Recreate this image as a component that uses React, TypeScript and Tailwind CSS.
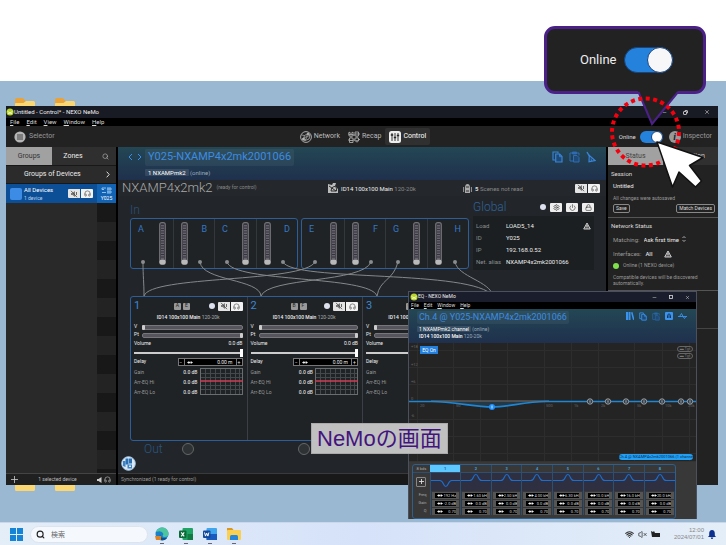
import React from "react";
import { Search, X, Minus, Settings, Power, Lock, Headphones, Wifi, VolumeX } from "lucide-react";

const UI = "font-['Roboto','Noto_Sans_CJK_JP',sans-serif]";

function Folder() {
  return (
    <svg className="h-4 w-5" viewBox="0 0 20 16" aria-hidden="true">
      <path d="M0 1.5Q0 0 1.5 0H8l2.500 3H20v4H0z" fill="#e8a33d" />
      <path d="M0 5.500Q0 5 1.500 5H8.500L11 3h7.500Q20 3 20 4.500V14.500Q20 16 18.500 16H1.500Q0 16 0 14.500z" fill="#fbd774" />
    </svg>
  );
}

function AppDot() {
  return (
    <svg className="size-2 shrink-0" viewBox="0 0 8 8" aria-hidden="true">
      <circle cx="4" cy="4" r="3.500" fill="#b9d52b" />
      <path d="M1.500 3.500q2.500 2.500 5 0M2 5.600q2-1 4 0" stroke="#eaf7b0" strokeWidth="1" fill="none" />
    </svg>
  );
}

function MuteGlyph() {
  return (
    <svg className="h-2 w-2" viewBox="0 0 8 8" fill="none" stroke="#444" aria-hidden="true">
      <path d="M1 3h1.500L5 1v6L2.500 5H1z" fill="#777" stroke="none" />
      <path d="M1 .8l6 6.400M6.500 2v3" strokeWidth=".8" />
    </svg>
  );
}

function MuteSolo() {
  return (
    <div className="flex h-[9px] shrink-0 gap-px">
      <button aria-label="Mute" className="flex w-3 items-center justify-center rounded-l-[1px] bg-[#e4e4e4]">
        <MuteGlyph />
      </button>
      <button aria-label="Solo" className="flex w-3 items-center justify-center rounded-r-[1px] bg-[#f2f2f2]">
        <Headphones className="size-[7px] text-[#444]" />
      </button>
    </div>
  );
}

function CopyGlyph({ className }: { className: string }) {
  return (
    <svg className={className} viewBox="0 0 11 12" fill="none" stroke="currentColor" aria-hidden="true">
      <path d="M3 9H1V1h5v1.500" strokeWidth="1.100" />
      <path d="M3.700 3h4L10 5.500V11H3.700z" strokeWidth="1.200" fill="#1f4a78" />
      <path d="M7.500 3v2.700H10" strokeWidth=".9" />
    </svg>
  );
}

function PasteGlyph({ className }: { className: string }) {
  return (
    <svg className={className} viewBox="0 0 11 12" fill="none" stroke="currentColor" aria-hidden="true">
      <path d="M4 10H1V2h2M8 2h2v2.500" strokeWidth="1" />
      <path d="M3.500 1h4v2h-4z" strokeWidth=".9" fill="currentColor" />
      <path d="M4.500 4.500h3.500L10 6.500V11H4.500z" strokeWidth="1" fill="#1f4a78" />
    </svg>
  );
}

function BroomGlyph({ className }: { className: string }) {
  return (
    <svg className={className} viewBox="0 0 10 12" fill="none" stroke="currentColor" aria-hidden="true">
      <path d="M1 1l2.300 4" strokeWidth="1.400" />
      <path d="M3.300 4.500L9 9.500 3 10.700z" strokeWidth="1.200" />
      <path d="M5 7.500l.5 2.500" strokeWidth=".9" />
    </svg>
  );
}

function WarningGlyph({ className }: { className: string }) {
  return (
    <svg className={className} viewBox="0 0 8 8" aria-hidden="true">
      <path d="M4 1L7.300 7H.7z" fill="#555" stroke="#ccc" strokeWidth="1" strokeLinejoin="round" />
      <path d="M4 3v2M4 5.700v.7" stroke="#fff" strokeWidth=".8" />
    </svg>
  );
}

function MenuBar({ items, className }: { items: string[]; className: string }) {
  return (
    <nav className={className}>
      {items.map((m) => (
        <button key={m}>
          <span className="underline">{m[0]}</span>
          {m.slice(1)}
        </button>
      ))}
    </nav>
  );
}

function RestoreGlyph() {
  return (
    <svg className="size-[5px]" viewBox="0 0 5 5" fill="none" stroke="#ddd" strokeWidth=".8" aria-hidden="true">
      <rect x=".5" y="1.500" width="3" height="3" rx=".5" />
      <path d="M1.800 .5H4a.5.5 0 0 1 .5.5v2.200" />
    </svg>
  );
}

function TitleBar() {
  return (
    <header className="flex h-3 shrink-0 items-center bg-[#191b24] pr-2 text-[6px] leading-3 text-[#eee]">
      <AppDot />
      <span className="flex-1">Untitled - Control* - NEXO NeMo</span>
      <div className="flex gap-4">
        <button aria-label="Minimize"><Minus className="size-[5px]" /></button>
        <button aria-label="Restore"><RestoreGlyph /></button>
        <button aria-label="Close"><X className="size-[6px]" /></button>
      </div>
    </header>
  );
}

function NetworkGlyph() {
  return (
    <svg className="size-3" viewBox="0 0 12 12" fill="none" stroke="#aaa" strokeWidth=".8" aria-hidden="true">
      <circle cx="6" cy="6" r="5.400" strokeWidth="1" />
      <path d="M1.500 4l3 .5L8 2.500 10 4 9 8 5 9.500 2 8.500M4.500 4.500Q3 6.500 5 9.500M8 2.500Q8 6 2 8M10 4Q7 4.500 5 9.500" />
      <circle cx="8" cy="3" r=".9" fill="#ccc" />
      <circle cx="3.500" cy="8" r=".9" fill="#ccc" />
    </svg>
  );
}

function RecapGlyph() {
  return (
    <svg className="size-3" viewBox="0 0 12 12" fill="none" stroke="#aaa" strokeWidth=".9" aria-hidden="true">
      <path d="M1 5V1l2 1.500L5 1v4zM1 3.500h4M7 1h3.500v4H7zM7 3h3.500M1.500 7H5v4.500H1.500zM1.500 9.500H5M7 7h3.500v3H7zM9 9v2.500M5 4h2M5 9h2M3 5v2M9 5v2M0 3h1M0 9h1.500M10.500 3H12M10.500 8.500H12" />
    </svg>
  );
}

function ControlGlyph() {
  return (
    <svg className="size-3" viewBox="0 0 12 12" aria-hidden="true">
      <rect width="12" height="12" rx="2.500" fill="#eee" />
      <path d="M3 2v8M6 2v8M9 2v8" stroke="#222" strokeWidth=".9" />
      <path d="M1.800 4h2.400M4.800 6.500h2.400M7.800 4.500h2.400" stroke="#222" strokeWidth="1.600" />
    </svg>
  );
}

function Toolbar() {
  return (
    <div className="relative flex h-[21px] shrink-0 items-center bg-[#222] pl-2 pr-[6px] text-[7px] text-[#999]">
      <button className="flex flex-1 items-center gap-[3px]">
        <svg className="size-3" viewBox="0 0 12 12" aria-hidden="true">
          <circle cx="6" cy="6" r="5.600" fill="#b5b5b5" />
          <path d="M3 4h6M3 6h6M3 8h6" stroke="#444" strokeWidth="1" />
        </svg>
        Selector
      </button>
      <div className="flex items-center gap-1 text-[#bbb]">
        <button className="flex items-center gap-[2px] px-1"><NetworkGlyph />Network</button>
        <button className="flex items-center gap-[2px]"><RecapGlyph />Recap</button>
        <button className="flex h-[17px] items-center gap-[2px] rounded-[2px] bg-[#303030] px-1 text-white"><ControlGlyph />Control</button>
      </div>
      <div className="flex flex-1 items-center justify-end">
        <label className="flex items-center gap-1 text-[6px] text-[#ddd]">
          Online
          <span className="relative flex">
            <input type="checkbox" role="switch" defaultChecked className="h-3 w-[23px] appearance-none rounded-full bg-[#2582dc]" />
            <span className="pointer-events-none absolute right-0 top-0 size-3 rounded-full border border-[#17457f] bg-white" />
          </span>
        </label>
        <button className="ml-[6px] flex items-center gap-[2px]">
          <span className="flex size-3 items-center justify-center rounded-full bg-[#999] font-['Liberation_Serif',serif] text-[10px] font-bold italic leading-3 text-[#222]">i</span>
          Inspector
        </button>
      </div>
    </div>
  );
}

function Sidebar() {
  return (
    <aside className="flex w-28 shrink-0 flex-col border-r-2 border-black bg-[#292929] text-[7px] text-[#ddd]">
      <div className="flex h-[18px] shrink-0 items-center bg-[#2f2f2f]">
        <button className="h-full w-[46px] bg-[#a1a1a1] text-[#333]">Groups</button>
        <button className="flex-1 text-[#eee]">Zones</button>
        <button aria-label="Search devices" className="w-[22px]"><Search className="mx-auto size-[7px] text-[#bbb]" /></button>
      </div>
      <button className="flex h-[19px] shrink-0 items-center border-y border-[#181818] bg-[#2b2b2b] pl-[18px] pr-[6px] text-[#eee]">
        <span className="flex-1 text-left">Groups of Devices</span>
        <svg className="h-[7px] w-1" viewBox="0 0 4 7" fill="none" stroke="#ddd" aria-hidden="true"><path d="M.7.7l2.500 2.800L.7 6.300" /></svg>
      </button>
      <div className="flex h-[19px] shrink-0 items-center bg-[#0d4f97] text-[5px] leading-[9px] text-white">
        <span className="ml-1 size-3 rounded-[2px] bg-[#3c8ce6]" />
        <div className="ml-[2px] flex-1 whitespace-nowrap"><p className="text-[6px]">All Devices</p><p className="text-[#b9d2ee]">1 device</p></div>
        <MuteSolo />
        <div className="ml-1 flex h-full w-[19px] flex-col items-center justify-center gap-px bg-[#1263b4]">
          <svg className="h-[7px] w-[11px]" viewBox="0 0 11 7" fill="none" stroke="#9cc9f5" aria-hidden="true">
            <path d="M5 1H1v1.500h2M5 5.500H1M7 0v7M9 0v7M6 2h5M6 5h5" strokeWidth=".9" />
          </svg>
          <span className="leading-[6px]">Y025</span>
        </div>
      </div>
      <div className="flex min-h-0 flex-1 justify-end">
        <div className="flex w-[19px] flex-col overflow-hidden">
          {Array.from({ length: 15 }, (_, i) => (
            <div key={i} className={i % 2 ? "h-[19px] shrink-0 bg-[#232323]" : "h-[19px] shrink-0 bg-[#181818]"} />
          ))}
        </div>
      </div>
      <footer className="flex h-3 shrink-0 items-center border-t border-[#444] bg-[#202020] px-[5px] text-[5px] text-[#bbb]">
        <button aria-label="Add group">
          <svg className="size-[7px]" viewBox="0 0 7 7" stroke="#ccc" aria-hidden="true"><path d="M3.500 0v7M0 3.500h7" strokeWidth=".8" /></svg>
        </button>
        <span className="flex-1 text-center">1 selected device</span>
        <svg className="h-[6px] w-[6px]" viewBox="0 0 6 6" aria-hidden="true"><path d="M0 2h1.500L4.500 0v6L1.500 4H0z" fill="#ccc" /></svg>
        <Headphones className="ml-px size-[7px] text-[#ccc]" />
      </footer>
    </aside>
  );
}

function Meter() {
  return (
    <svg className="h-[43px] w-[7px]" viewBox="0 0 7 43" aria-hidden="true">
      <rect x=".7" y=".7" width="5.600" height="41.600" rx="2" fill="#35333c" stroke="#737378" strokeWidth="1.200" />
      <path d="M3.500 3v35" stroke="#66626e" strokeWidth="3" strokeDasharray="1.500 1" />
      <rect x=".5" y="37.500" width="6" height="5" rx="2" fill="#b9b9b9" />
    </svg>
  );
}

function InputBank({ letters }: { letters: string[] }) {
  return (
    <div className="grid h-[51px] flex-1 grid-cols-4 rounded-[3px] border border-[#2c5f9a] bg-[#1f2326]">
      {letters.map((l, i) => (
        <div
          key={l}
          className={
            "flex items-start justify-between px-[7px] pt-[3px] text-[9px] leading-[14px] text-[#3478c4] " +
            (i % 2 ? "flex-row-reverse " : "") +
            (i ? "border-l border-[#33383c]" : "")
          }
        >
          {l}
          <Meter />
        </div>
      ))}
    </div>
  );
}

const cables = [
  "M25 115C25 130 26 135 26 149",
  "M82 115C84 134 142 132 143 149",
  "M109 115C115 136 252 128 259 149",
  "M165 115C175 135 355 122 375 149",
  "M197 115C185 136 32 128 26 149",
  "M253 115C245 136 150 130 143 149",
  "M280 115C275 134 262 132 259 149",
  "M337 115C340 130 372 134 375 149",
];
const jacks = [25, 82, 109, 165, 197, 253, 280, 337];

function Patching() {
  return (
    <svg className="pointer-events-none absolute left-0 top-0 h-[160px] w-[488px]" viewBox="0 0 488 160" fill="none" aria-hidden="true">
      {cables.map((d) => <path key={d} d={d} stroke="#85878a" strokeWidth="1" />)}
      {jacks.map((x) => <circle key={x} cx={x} cy="115" r="2" fill="#8a8c8f" />)}
    </svg>
  );
}

function LevelBar({ label, end }: { label: string; end: boolean }) {
  return (
    <div className="flex h-2 items-center gap-px text-[5px]">
      <span className="w-[7px]">{label}</span>
      <span className="relative h-[5px] flex-1 rounded-[2px] border border-[#77777b] bg-[#56545c]">
        <span className={end ? "absolute -right-px -top-px h-[5px] w-[3px] rounded-[1px] bg-[#ccc]" : "absolute -left-px -top-px h-[5px] w-[3px] rounded-[1px] bg-[#ccc]"} />
      </span>
    </div>
  );
}

function Arrows() {
  return (
    <svg className="ml-[2px] h-[3px] w-[6px] shrink-0" viewBox="0 0 6 3" aria-hidden="true">
      <path d="M0 1.500L2.300 0v3zM6 1.500L3.700 0v3zM2 1.100h2v.8H2z" fill="#eee" />
    </svg>
  );
}

function Channel({ n, tags }: { n: number; tags: string[] }) {
  return (
    <section className={"pl-[3px] pr-1 pt-[3px] text-[5px] text-[#eee]" + (n > 1 ? " border-l border-[#3b4044]" : "")}>
      <div className="flex h-3 items-center">
        <span className="w-10 text-[11px] leading-3 text-[#3a87d8]">{n}</span>
        <div className="flex gap-[2px]">
          {tags.map((t) => (
            <span key={t} className="flex size-[7px] items-center justify-center rounded-[1px] bg-[#999] text-[#222]">{t}</span>
          ))}
        </div>
        <span className="ml-auto mr-[3px] size-[6px] rounded-full bg-[#dde0ee]" />
        <MuteSolo />
      </div>
      <p className="h-[11px] text-center leading-[11px]"><b className="font-medium">ID14 100x100 Main</b> <span className="text-[#aaa]">120-20k</span></p>
      <LevelBar label="V" end={false} />
      <LevelBar label="Pt" end />
      <label>
        <span className="flex h-[9px] items-center justify-between"><span>Volume</span><span>0.0 dB</span></span>
        <input
          type="range"
          defaultValue={100}
          className="block h-[9px] w-full appearance-none bg-transparent [&::-webkit-slider-runnable-track]:h-[2px] [&::-webkit-slider-runnable-track]:bg-[#ccc] [&::-webkit-slider-thumb]:-mt-[3px] [&::-webkit-slider-thumb]:h-2 [&::-webkit-slider-thumb]:w-[3px] [&::-webkit-slider-thumb]:appearance-none [&::-webkit-slider-thumb]:bg-white"
        />
      </label>
      <div className="flex h-[10px] items-center justify-between">
        <label htmlFor={`delay-${n}`}>Delay</label>
        <div className="flex h-2 w-[65px] items-center border border-[#777] bg-black leading-[6px]">
          <button className="w-[6px] border-r border-[#777]">−</button>
          <Arrows />
          <input id={`delay-${n}`} defaultValue="0.00 m" className="h-[6px] min-w-0 flex-1 bg-transparent pr-[3px] text-right" />
          <button className="w-[6px] border-l border-[#777]">+</button>
        </div>
      </div>
      <div className="flex items-stretch">
        <dl className="grid flex-1 grid-cols-[1fr_auto] pr-[2px] leading-[10px] text-[#999]">
          {["Gain", "Arr-EQ Hi", "Arr-EQ Lo"].map((k) => (
            <React.Fragment key={k}>
              <dt>{k}</dt>
              <dd className="font-medium text-[#ddd]">0.0 dB</dd>
            </React.Fragment>
          ))}
        </dl>
        <svg className="mt-px h-[27px] w-[43px]" viewBox="0 0 43 27" fill="none" aria-hidden="true">
          <path d="M5.500 0v27M10.500 0v27M15.500 0v27M20.500 0v27M25.500 0v27M30.500 0v27M35.500 0v27M39.500 0v27M0 5.500h43M0 9.500h43M0 17.500h43M0 21.500h43" stroke="#45494c" />
          <rect x=".5" y=".5" width="42" height="26" stroke="#6a6d70" />
          <path d="M0 13h43" stroke="#cf3f56" strokeWidth="1.400" />
        </svg>
      </div>
    </section>
  );
}

function SquareButton({ label, children }: { label: string; children: React.ReactNode }) {
  return <button aria-label={label} className="flex h-[9px] w-3 items-center justify-center rounded-[1px] bg-[#eee] text-[#333]">{children}</button>;
}

function DevicePanel() {
  const facts = [["Load", "LOAD5_14"], ["ID", "Y025"], ["IP", "192.168.0.52"], ["Net. alias", "NXAMP4x2mk2001066"]];
  return (
    <main className="flex min-w-0 flex-1 flex-col bg-[#22262a]">
      <div className="flex h-[33px] shrink-0 bg-gradient-to-b from-[#234754] to-[#1f304d] pl-[10px] pt-[2px]">
        <svg className="mt-1 h-2 w-[14px]" viewBox="0 0 14 8" fill="none" stroke="#3a8fe6" aria-hidden="true"><path d="M4 1L1 4l3 3M10 1l3 3-3 3" /></svg>
        <div className="ml-[3px] flex-1">
          <h1 className="flex h-[17px] w-fit items-center rounded-[2px] bg-white/5 px-[3px] text-[11px] text-[#3b8ce2]">Y025-NXAMP4x2mk2001066</h1>
          <p className="mt-[2px] text-[6px] leading-[9px] text-[#9ab]"><span className="rounded-[1px] bg-white/10 px-[3px] text-white">1 NXAMPmk2</span> (online)</p>
        </div>
        <div className="mr-[10px] flex h-4 items-start gap-[6px] pt-[2px] text-[#3a83d6]">
          <button aria-label="Copy"><CopyGlyph className="h-3 w-[11px]" /></button>
          <button aria-label="Paste" className="text-[#2f6cb4]"><PasteGlyph className="h-3 w-[11px]" /></button>
          <button aria-label="Clear"><BroomGlyph className="h-3 w-[10px]" /></button>
        </div>
      </div>
      <div className="flex h-4 shrink-0 items-center bg-[#24282c] pl-1 pr-[6px] text-[5px] text-[#888]">
        <h2 className="text-[13px] font-light leading-4 text-[#aaa]">NXAMP4x2mk2</h2>
        <span className="ml-1 flex-1">(ready for control)</span>
        <svg className="size-[10px]" viewBox="0 0 10 10" aria-hidden="true"><path d="M0 1l4 1 1-2h3l-1 3 3 3v4H0z" fill="#bbb" /><path d="M1 3l7 5M3 8Q3 4 6 3.500T8.500 8z" stroke="#222" fill="none" strokeWidth=".9" /></svg>
        <span className="ml-[3px] w-[122px] text-[6px]"><span className="text-[#eee]">ID14 100x100 Main</span> 120-20k</span>
        <svg className="h-[9px] w-[9px]" viewBox="0 0 9 9" aria-hidden="true"><path d="M2 9V4Q2 0 4.500 0T7 4v5z" fill="#aaa" /><path d="M.6 3v5M8.400 3v5" stroke="#999" /><path d="M3 3h3M3 7h3" stroke="#333" /></svg>
        <span className="ml-[3px] w-[100px] text-[6px]"><b className="text-[#ddd]">5</b> Scenes not read</span>
        <MuteSolo />
      </div>
      <div className="flex-1 px-3 pt-[2px]">
        <div className="flex">
          <div className="flex-1">
            <h3 className="h-5 text-[12px] font-light leading-6 text-[#2a5078]">In</h3>
            <div className="relative -ml-3 pl-3">
              <div className="flex gap-[3px]">
                <InputBank letters={["A", "B", "C", "D"]} />
                <InputBank letters={["E", "F", "G", "H"]} />
              </div>
              <div className="absolute -top-[71px] left-0"><Patching /></div>
            </div>
          </div>
          <section className="ml-1 w-[121px]">
            <div className="flex h-[18px] items-center gap-1">
              <h3 className="flex-1 text-[12px] font-light text-[#2f6299]">Global</h3>
              <span className="size-[6px] rounded-full bg-[#dde0ee]" />
              <SquareButton label="Settings"><Settings className="size-[7px]" /></SquareButton>
              <SquareButton label="Power"><Power className="size-[7px]" /></SquareButton>
              <SquareButton label="Lock"><Lock className="size-[7px]" /></SquareButton>
            </div>
            <dl className="relative grid grid-cols-[30px_1fr] gap-y-px bg-[#1b1f21] px-[3px] pb-[3px] pt-1 text-[6px] leading-[11px] text-[#8a8f93]">
              {facts.map(([k, v]) => (
                <React.Fragment key={k}>
                  <dt>{k}</dt>
                  <dd className="whitespace-nowrap text-[#eee]">{v}</dd>
                </React.Fragment>
              ))}
              <WarningGlyph className="absolute right-[3px] top-[6px] size-2" />
            </dl>
          </section>
        </div>
        <div className="mt-[26px] grid h-[145px] grid-cols-4 rounded-[3px] border border-[#2c5f9a] bg-[#1f2326]">
          <Channel n={1} tags={["A", "E"]} />
          <Channel n={2} tags={["B", "F"]} />
          <Channel n={3} tags={["C", "G"]} />
          <div className="border-l border-[#3b4044]" />
        </div>
        <div className="flex h-4 items-center">
          <h3 className="w-[52px] pl-[14px] text-[12px] font-light text-[#2a5580]">Out</h3>
          <span className="size-3 rounded-full border border-[#666] bg-[#2e3235]" />
          <span className="ml-[104px] size-3 rounded-full border border-[#666] bg-[#2e3235]" />
        </div>
        <button aria-label="Presets" className="-ml-[9px] -mt-px block">
          <svg className="size-[15px]" viewBox="0 0 15 15" aria-hidden="true">
            <circle cx="7.500" cy="7.500" r="6.800" fill="#dbe9f7" stroke="#a9c8e6" />
            <path d="M4.500 2.500h3v6h-3zM8 2.500h3v5H8z" fill="#2c70b4" />
            <path d="M2 5h2.500v6L2 10zM6.500 8.500h4.500v4H6.500z" fill="#3d82c4" />
            <path d="M8 10.500h2M9 9v2" stroke="#fff" strokeWidth=".8" />
          </svg>
        </button>
      </div>
      <footer className="h-3 shrink-0 border-t border-[#3a3a3a] bg-[#191919] pl-[3px] text-[5px] leading-[11px] text-[#999]">Synchronized (1 ready for control)</footer>
    </main>
  );
}

function Inspector() {
  return (
    <aside className="flex w-28 shrink-0 flex-col border-l-2 border-black bg-[#222] text-[6px] text-[#999]">
      <div className="flex h-[18px] shrink-0 bg-[#303030] text-[7px]">
        <button className="flex-1 bg-[#a1a1a1] text-[#444]">Status</button>
        <button className="flex-1 text-[#ccc]">Selection</button>
      </div>
      <section className="h-[53px] border-b border-[#555] px-[3px] pt-[3px] leading-3">
        <h3 className="text-[#ddd]">Session</h3>
        <p className="pl-[2px] text-[#eee]">Untitled</p>
        <p className="pl-[2px] text-[5px]">All changes were autosaved</p>
        <div className="flex justify-between pl-[2px] text-[5px] leading-[7px] text-[#ddd]">
          <button className="rounded-[2px] border border-[#888] px-[2px]">Save</button>
          <button className="rounded-[2px] border border-[#888] px-[2px]">Match Devices</button>
        </div>
      </section>
      <section className="border-b border-[#555] px-[3px] pb-1 pt-[2px]">
        <h3 className="leading-[11px] text-[#ddd]">Network Status</h3>
        <label className="flex h-4 items-center gap-1 pl-[2px]">
          Matching:
          <span className="flex items-center text-[#eee]">
            <select className="w-[38px] appearance-none bg-transparent"><option>Ask first time</option></select>
            <svg className="h-[6px] w-1" viewBox="0 0 4 6" fill="none" stroke="#ccc" strokeWidth=".8" aria-hidden="true"><path d="M.5 2L2 .5 3.500 2M.5 4L2 5.500 3.500 4" /></svg>
          </span>
        </label>
        <p className="flex h-[13px] items-center gap-1 pl-[2px]">Interfaces: <b className="font-medium text-[#ddd]">All</b><WarningGlyph className="ml-2 size-2" /></p>
        <p className="flex h-3 items-center gap-1 pl-[2px] text-[5px]"><span className="size-[6px] rounded-full bg-[#7ee04b]" />Online (1 NEXO device)</p>
        <p className="pl-[2px] pt-[2px] text-[5px] leading-[6px]">Compatible devices will be discovered automatically.</p>
      </section>
      <div className="mt-[37px] border-t border-[#444]" />
    </aside>
  );
}

const nodes = [181, 199, 217, 235, 253, 272, 281];
const freqs: [string, number][] = [["20", 11], ["50", 47], ["100", 73], ["500", 137], ["1k", 165], ["2k", 192], ["5k", 228], ["10k", 256], ["20k", 279]];
const gains: [string, number][] = [["+18", 4], ["+12", 22], ["+6", 39], ["0", 56], ["-6", 73]];

function EqGraph() {
  return (
    <div className="relative h-[118px] shrink-0">
      <svg className="h-full w-full" viewBox="0 0 287 118" preserveAspectRatio="none" role="img" aria-label="EQ curve">
        <rect width="287" height="118" fill="#242424" />
        <path d="M8.500 0v118M44.500 0v118M71.500 0v118M98.500 0v118M135.500 0v118M162.500 0v118M189.500 0v118M225.500 0v118M253.500 0v118M280.500 0v118M0 7.500h287M0 24.500h287M0 41.500h287M0 76.500h287M0 93.500h287M0 110.500h287" stroke="#2d2d2d" />
        <g fontSize="4" fill="#666" fontFamily="Roboto, sans-serif">
          {gains.map(([t, y]) => <text key={t} x="2" y={y + 1}>{t}</text>)}
          {freqs.map(([t, x]) => <text key={t} x={x} y="64">{t}</text>)}
        </g>
        <path d="M22 58.500C45 58.500 66 64 83 64S115 58.500 138 58.500z" fill="#243845" />
        <path d="M22 58H140" stroke="#777" />
        <path d="M0 58.500H22C45 58.500 66 64 83 64S115 58.500 138 58.500H287" stroke="#1e86d4" strokeWidth="1.700" fill="none" />
        <circle cx="83" cy="64" r="3" fill="#2090ff" />
        <path d="M83 62.500v3" stroke="#fff" strokeWidth=".8" />
        {nodes.map((x) => (
          <g key={x}>
            <circle cx={x} cy="58.500" r="2.700" fill="#2a3a48" stroke="#aaa" strokeWidth=".9" />
            <path d={`M${x} 57.300v2.400`} stroke="#ccc" strokeWidth=".8" />
          </g>
        ))}
      </svg>
      <button className="absolute left-[11px] top-[3px] h-2 w-[18px] bg-[#2380dc] text-[5px] leading-2 text-white">EQ On</button>
      <div className="absolute right-[3px] top-[3px] flex flex-col gap-px text-[4px] leading-1 text-[#777]">
        <button className="h-[6px] w-4 rounded-full border border-[#666]">▬ Tgt</button>
        <button className="h-[6px] w-4 rounded-full border border-[#666]">▬ Tgt</button>
      </div>
      <span className="absolute bottom-px right-[3px] h-[6px] w-[74px] whitespace-nowrap rounded-full bg-[#22a0f5] text-center text-[4px] leading-[6px] text-[#0b2b4a]">Ch.4 @ NXAMP4x2mk2001066 (1 channel)</span>
    </div>
  );
}

const bands: Record<string, string[]> = {
  Freq: ["192 Hz", "1.60 kHz", "2.50 kHz", "4.00 kHz", "6.30 kHz", "10.0 kHz", "16.0 kHz", "20.0 kHz"],
  Gain: ["-2.0 dB", "0.0 dB", "0.0 dB", "0.0 dB", "0.0 dB", "0.0 dB", "0.0 dB", "0.0 dB"],
  Q: ["0.70", "0.70", "0.70", "0.70", "0.70", "0.70", "0.70", "0.70"],
};

function EqBands() {
  return (
    <div className="flex-1 border-t border-[#333] bg-[#383838] pl-[3px] pt-[2px]">
      <div className="w-[264px] overflow-hidden rounded-[3px] border border-[#2f5f8c] pb-[3px]">
        <table className="w-full table-fixed border-collapse text-[4px] text-[#aaa]">
          <thead>
            <tr className="h-[7px] leading-[7px] text-[#3fa0dd]">
              <th className="w-[17px] font-normal text-[#aaa]">8 bds</th>
              {bands.Q.map((_, i) => (
                <th key={i} className={i === 0 ? "bg-[#5cc8ff] text-[#1b5f8f]" : "border-l border-[#2f4f70]"}>{i + 1}</th>
              ))}
            </tr>
          </thead>
          <tbody>
            <tr className="h-[18px]">
              <td className="border-t border-[#2f4f70]">
                <button aria-label="Add band" className="mx-auto flex size-[10px] items-center justify-center rounded-[1px] border border-[#888]">
                  <svg className="size-[5px]" viewBox="0 0 5 5" stroke="#ddd" aria-hidden="true"><path d="M2.500 0v5M0 2.500h5" strokeWidth=".9" /></svg>
                </button>
              </td>
              {bands.Q.map((_, i) => (
                <td key={i} className="border-l border-t border-[#2f4f70] bg-[#2e3042] p-0">
                  <svg className="block h-[17px] w-full" viewBox="0 0 30 17" preserveAspectRatio="none" fill="none" stroke="#1c6fd0" strokeWidth="1.100" aria-hidden="true">
                    {i === 0 ? <path d="M0 7.500h9c4 0 3 6 6 6s2-6 6-6h9" /> : <path d="M0 7.500h9c4 0 3-6 6-6s2 6 6 6h9" />}
                  </svg>
                </td>
              ))}
            </tr>
            {Object.entries(bands).map(([name, vals]) => (
              <tr key={name} className="h-2">
                <th className="p-0 pr-[3px] text-right font-normal leading-[7px]">{name}</th>
                {vals.map((v, i) => (
                  <td key={i} className="border-l border-[#2f4f70] px-px pb-0 pt-px">
                    <div className="flex h-[7px] items-center border border-x-[3px] border-[#555] bg-black">
                      <Arrows />
                      <input aria-label={`${name} band ${i + 1}`} defaultValue={v} className="h-[5px] min-w-0 flex-1 bg-transparent text-right leading-[5px] text-[#ddd]" />
                    </div>
                  </td>
                ))}
              </tr>
            ))}
          </tbody>
        </table>
      </div>
    </div>
  );
}

function EqWindow() {
  return (
    <section className="absolute bottom-[3px] right-[29px] flex h-[228px] w-[289px] flex-col border border-[#4a5060] bg-[#383838]">
      <header className="flex h-[10px] shrink-0 items-center bg-[#1a1d2b] pl-px pr-[6px] text-[5px] text-[#eee]">
        <AppDot />
        <span className="flex-1">EQ - NEXO NeMo</span>
        <div className="flex items-center gap-3">
          <button aria-label="Minimize"><Minus className="size-[5px]" /></button>
          <button aria-label="Maximize"><svg className="size-1" viewBox="0 0 4 4" fill="none" stroke="#ddd" aria-hidden="true"><rect x=".5" y=".5" width="3" height="3" strokeWidth=".8" /></svg></button>
          <button aria-label="Close"><X className="size-[5px]" /></button>
        </div>
      </header>
      <MenuBar items={["File", "Edit", "Window", "Help"]} className="flex h-[7px] shrink-0 items-center gap-[5px] bg-black pl-[2px] text-[5px] leading-[7px] text-[#ddd]" />
      <div className="flex h-[34px] shrink-0 justify-between bg-gradient-to-b from-[#234754] to-[#1f304d] pl-2 pr-[9px] pt-[2px] text-[5px] leading-[7px] text-[#9ab]">
        <div>
          <h2 className="flex h-[13px] w-fit items-center rounded-[2px] bg-white/5 px-[2px] text-[9px] text-[#3b8ce2]">Ch.4 @ Y025-NXAMP4x2mk2001066</h2>
          <p className="mt-[2px]"><span className="rounded-[1px] bg-white/10 px-[2px] text-white">1 NXAMPmk2 channel</span> (online)</p>
          <p className="pl-[2px]"><b className="font-medium text-white">ID14 100x100 Main</b> 120-20k</p>
        </div>
        <div className="flex h-[10px] items-center gap-[5px] text-[#3a93ee]">
          <button aria-label="Library"><svg className="size-2" viewBox="0 0 8 8" aria-hidden="true"><path d="M0 0h2v8H0zM2.500 0h2v8h-2zM5 .5L6.500 0 8.500 7.500 7 8z" fill="#3a93ee" /></svg></button>
          <button aria-label="Copy EQ"><CopyGlyph className="h-[9px] w-2" /></button>
          <button aria-label="Paste EQ" className="text-[#2a68a8]"><PasteGlyph className="h-[9px] w-2" /></button>
          <button aria-label="Bypass"><svg className="size-2" viewBox="0 0 8 8" aria-hidden="true"><rect width="8" height="8" rx="1" fill="#3a93ee" /><path d="M2.500 6V3.500Q4 0 5.500 3.500V6M4 3v3" stroke="#13365c" fill="none" /></svg></button>
          <button aria-label="Flatten"><svg className="h-2 w-[9px]" viewBox="0 0 9 8" fill="none" stroke="#3a93ee" aria-hidden="true"><path d="M0 4.500h9M1.500 4.500L3.500 1.500l1.500 3 1.500 2L8 4.500" strokeWidth=".9" /></svg></button>
        </div>
      </div>
      <EqGraph />
      <EqBands />
    </section>
  );
}

function Callout() {
  return (
    <div className="absolute right-5 top-[26px] h-[68px] w-[162px]">
      <label className="flex h-full items-center rounded-[11px] border-[3px] border-[#4b2088] bg-[#222] pl-[33px] text-[13px] text-[#eee]">
        <span className="w-11">Online</span>
        <span className="relative flex">
          <input type="checkbox" role="switch" defaultChecked className="h-[26px] w-[49px] appearance-none rounded-full border border-[#17457f] bg-[#2582dc]" />
          <span className="pointer-events-none absolute right-0 top-0 size-[26px] rounded-full border border-[#17457f] bg-[#f7f7fa]" />
        </span>
      </label>
      <svg className="absolute left-[90px] top-[64px] h-[38px] w-[50px]" viewBox="0 0 50 38" aria-hidden="true">
        <path d="M5 0h39v1L18 35 4 1z" fill="#222" />
        <path d="M4.500 2L18 34 44 2" fill="none" stroke="#4b2088" strokeWidth="2" />
      </svg>
      <svg className="absolute left-[62px] top-[68px] h-[100px] w-[100px]" viewBox="0 0 100 100" aria-hidden="true">
        <circle cx="39.500" cy="38" r="33.500" fill="none" stroke="#f5000c" strokeWidth="4" strokeDasharray="4 3.516" />
        <path d="M51 48L97 63.500 83.500 71.500 95.500 87 89.500 93 73 78 66.500 93z" fill="#fff" stroke="#111" strokeWidth="1.500" strokeLinejoin="round" />
      </svg>
    </div>
  );
}

function TaskIcon({ label, children }: { label: string; children: React.ReactNode }) {
  return (
    <button aria-label={label} className="flex flex-col items-center gap-[2px] pt-[2px]">
      <svg className="size-[14px]" viewBox="0 0 14 14" aria-hidden="true">{children}</svg>
      <span className="h-px w-1 bg-[#667]" />
    </button>
  );
}

function Taskbar() {
  return (
    <footer className="flex h-[23px] shrink-0 items-center border-t border-[#c9d8ea] bg-gradient-to-r from-[#e4eef8] via-[#d6e2f9] to-[#e4eef8] px-[10px] font-['Liberation_Sans','Noto_Sans_CJK_JP',sans-serif]">
      <button aria-label="Start">
        <svg className="size-[13px]" viewBox="0 0 13 13" aria-hidden="true"><path d="M0 0h6v6H0zM7 0h6v6H7zM0 7h6v6H0zM7 7h6v6H7z" fill="#1583d6" /></svg>
      </button>
      <label className="ml-[7px] flex h-[17px] w-[118px] items-center gap-[6px] rounded-full border border-[#dde4ee] bg-[#f5f9fd] pl-[5px]">
        <Search className="size-[9px] text-[#222]" strokeWidth={3} />
        <input aria-label="検索" placeholder="検索" className="h-[14px] min-w-0 flex-1 bg-transparent text-[7px] placeholder:text-[#666]" />
      </label>
      <div className="ml-[7px] flex gap-[10px]">
        <TaskIcon label="Edge">
          <circle cx="7" cy="7" r="6.500" fill="#1b80c9" />
          <path d="M1 5Q3 0 8 .5T13.500 7q0 3-4 3-3 0-1-3Q7 3 1 5z" fill="#4dc6a0" />
          <path d="M5 7Q4 10 8 11l4 0Q10 14 6 13z" fill="#0c4f93" />
          <path d="M0 9h6v4H1z" fill="#d9842b" />
        </TaskIcon>
        <TaskIcon label="Excel">
          <rect x="3.500" y="1" width="10.500" height="12" rx="1" fill="#21a366" />
          <path d="M8.500 7H14v6H8.500z" fill="#107c41" />
          <rect y="3.500" width="7.500" height="7.500" rx="1" fill="#0b6b38" />
          <path d="M2.200 5.300l3 4M5.200 5.300l-3 4" stroke="#fff" strokeWidth="1.100" />
        </TaskIcon>
        <TaskIcon label="Word">
          <rect x="3.500" y="1" width="10.500" height="12" rx="1" fill="#41a5ee" />
          <path d="M3.500 7H14v6H3.500z" fill="#185abd" />
          <rect y="3.500" width="7.500" height="7.500" rx="1" fill="#12489e" />
          <path d="M1.500 5.500l1 3.600 1.200-3 1.200 3 1-3.600" stroke="#fff" fill="none" />
        </TaskIcon>
        <TaskIcon label="Explorer">
          <path d="M0 1h5l1.500 2H13v3H0z" fill="#d99a1f" />
          <rect y="3" width="14" height="10" rx="1" fill="#fbcf4f" />
          <path d="M3 13V9.500Q3 8 4.500 8h5Q11 8 11 9.500V13z" fill="#2786d9" />
        </TaskIcon>
      </div>
      <div className="ml-auto flex items-center text-[#333]">
        <Wifi className="size-[9px]" strokeWidth={3} />
        <VolumeX className="ml-1 size-[9px]" />
        <svg className="ml-1 h-[7px] w-[10px]" viewBox="0 0 10 7" aria-hidden="true"><path d="M0 0l2 1 1-1 1 2h5v4H1z" fill="#222" /></svg>
        <time className="ml-[13px] text-right text-[6px] leading-[7px] text-[#888]">12:00<br />2024/07/01</time>
        <svg className="ml-1 h-[9px] w-2" viewBox="0 0 8 9" aria-hidden="true"><path d="M4 0Q6.800.3 6.800 3.500V5.500L8 7H0L1.200 5.500V3.500Q1.200.3 4 0zM2.700 7.500h2.600Q5 9 4 9T2.700 7.500z" fill="#0a2f8f" /></svg>
      </div>
    </footer>
  );
}

export default function App() {
  return (
    <div className={"relative flex min-h-screen w-full flex-col overflow-hidden bg-white pt-[81px] " + UI}>
      <div className="relative flex flex-1 flex-col bg-[#9bb8d3]">
        <div className="flex gap-5 pl-[15px] pt-[17px]"><Folder /><Folder /></div>
        <div className="absolute bottom-[31px] left-[15px] flex gap-5"><Folder /><Folder /></div>
        <div className="absolute bottom-[37px] left-[6px] right-2 top-[25px] flex flex-col overflow-hidden bg-[#222]">
          <TitleBar />
          <MenuBar items={["File", "Edit", "View", "Window", "Help"]} className="flex h-2 shrink-0 items-center gap-[7px] bg-black pl-1 text-[6px] leading-2 text-[#ddd]" />
          <Toolbar />
          <div className="relative min-h-0 flex-1">
            <div className="flex h-full overflow-hidden">
              <Sidebar />
              <DevicePanel />
              <Inspector />
            </div>
          </div>
        </div>
        <EqWindow />
        <p className="absolute bottom-[68px] left-[311px] h-[31px] border border-[#aaa] bg-[#c9c9c9]/95 px-[5px] font-['Liberation_Sans','Noto_Sans_CJK_JP',sans-serif] text-[22px] leading-[30px] text-[#43147d]">NeMoの画面</p>
      </div>
      <Taskbar />
      <Callout />
    </div>
  );
}
